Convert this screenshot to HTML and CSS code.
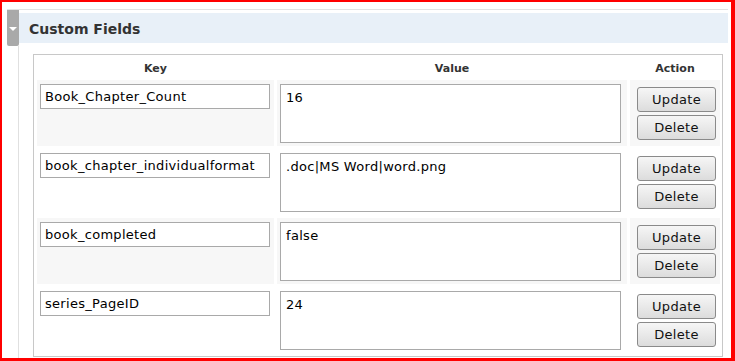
FILE: index.html
```html
<!DOCTYPE html>
<html>
<head>
<meta charset="utf-8">
<link rel="stylesheet" href="styles.css">
</head>
<body>
<div class="frame">
  <div class="panel">
    <div class="panel-head">
      <div class="tab"><span class="arrow"></span></div>
      <div class="title">Custom Fields</div>
    </div>
    <div class="panel-body">
      <div class="box">
        <div class="grid">
          <div class="th">Key</div>
          <div class="th">Value</div>
          <div class="th">Action</div>

          <div class="cell odd"><input class="key" type="text" value="Book_Chapter_Count"></div>
          <div class="cell odd"><textarea class="val">16</textarea></div>
          <div class="cell odd act"><button class="btn">Update</button><button class="btn">Delete</button></div>

          <div class="cell"><input class="key" type="text" value="book_chapter_individualformat"></div>
          <div class="cell"><textarea class="val">.doc|MS Word|word.png</textarea></div>
          <div class="cell act"><button class="btn">Update</button><button class="btn">Delete</button></div>

          <div class="cell odd"><input class="key" type="text" value="book_completed"></div>
          <div class="cell odd"><textarea class="val">false</textarea></div>
          <div class="cell odd act"><button class="btn">Update</button><button class="btn">Delete</button></div>

          <div class="cell"><input class="key" type="text" value="series_PageID"></div>
          <div class="cell"><textarea class="val">24</textarea></div>
          <div class="cell act"><button class="btn">Update</button><button class="btn">Delete</button></div>
        </div>
      </div>
    </div>
  </div>
</div>
</body>
</html>
```
FILE: styles.css
```css
html, body {
  margin: 0;
  padding: 0;
  background: #fff;
}
body {
  font-family: "DejaVu Sans", Verdana, sans-serif;
  color: #000;
  overflow: hidden;
}
.frame {
  width: 735px;
  height: 361px;
  box-sizing: border-box;
  border-style: solid;
  border-color: #ff0000;
  border-width: 2px 4px 3px 2px;
  padding: 7px 0 0 5px;
  overflow: hidden;
}
.panel {
  width: 721px;
  border-top: 1px solid #e2e2e2;
}
.panel-head {
  display: flex;
  height: 36px;
}
.tab {
  width: 12px;
  height: 36px;
  background: #a9a9a9;
  border-radius: 0 0 2px 2px;
  display: flex;
  align-items: center;
  justify-content: center;
}
.arrow {
  width: 0;
  height: 0;
  border-left: 4px solid transparent;
  border-right: 4px solid transparent;
  border-top: 4px solid #fff;
  margin-top: 2px;
}
.title {
  flex: 1;
  margin-top: 3px;
  height: 30px;
  background: #e8f0f8;
  font-weight: bold;
  font-size: 14px;
  color: #333;
  line-height: 32px;
  padding-left: 10px;
}
.panel-body {
  margin-left: 11px;
  border-left: 1px solid #e0e0e0;
  padding: 8px 0 0 14px;
  height: 320px;
}
.box {
  width: 690px;
  box-sizing: border-box;
  border: 1px solid #c8c8c8;
  padding: 0 3px 3px 3px;
}
.grid {
  display: grid;
  grid-template-columns: 237px 350px 90px;
  grid-auto-rows: 66px;
  grid-template-rows: 22px;
  gap: 3px;
}
.th {
  font-size: 11px;
  font-weight: bold;
  color: #333;
  text-align: center;
  line-height: 27px;
}
.cell {
  padding: 4px 3px 3px 3px;
  box-sizing: border-box;
}
.cell.odd {
  background: #f7f7f7;
}
.key {
  display: block;
  width: 230px;
  height: 25px;
  box-sizing: border-box;
  border: 1px solid #a9a9a9;
  padding: 0 4px;
  font-family: "DejaVu Sans", Verdana, sans-serif;
  font-size: 13px;
  letter-spacing: 0.3px;
  color: #000;
  background: #fff;
  margin: 0;
}
.val {
  display: block;
  width: 341px;
  height: 59px;
  box-sizing: border-box;
  border: 1px solid #a9a9a9;
  padding: 5px 5px;
  font-family: "DejaVu Sans", Verdana, sans-serif;
  font-size: 13px;
  letter-spacing: 0.3px;
  color: #000;
  background: #fff;
  resize: none;
  margin: 0;
}
.act {
  display: flex;
  flex-direction: column;
  align-items: flex-start;
  padding: 7px 0 0 7px;
  gap: 3px;
}
.btn {
  width: 79px;
  height: 25px;
  box-sizing: border-box;
  border: 1px solid #8a8a8a;
  border-radius: 3px;
  background: linear-gradient(#f6f6f6, #dcdcdc);
  font-family: "DejaVu Sans", Verdana, sans-serif;
  font-size: 13px;
  letter-spacing: 0.3px;
  color: #111;
  padding: 0;
  margin: 0;
}
```
